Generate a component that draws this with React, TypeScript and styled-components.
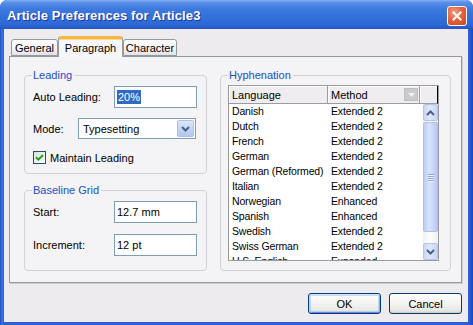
import React from 'react';
import styled, { createGlobalStyle } from 'styled-components';

const GlobalStyle = createGlobalStyle`
  html, body { margin: 0; padding: 0; width: 473px; height: 325px; overflow: hidden; background: #ffffff; }
  * { box-sizing: border-box; }
`;

const UI_FONT = `Tahoma, "Liberation Sans", Arial, sans-serif`;

const Window = styled.div`
  position: relative;
  width: 473px;
  height: 325px;
  display: flex;
  flex-direction: column;
  background: linear-gradient(90deg, #1d4fc9 0px, #3b72e0 2px, #2c5fd6 4px, #2c5fd6 calc(100% - 4px), #1a47bd 100%);
  border-radius: 7px 7px 0 0;
  overflow: hidden;
  font-family: ${UI_FONT};
  font-size: 11px;
  color: #000;
`;

const TitleBar = styled.div`
  height: 29px;
  flex: none;
  display: flex;
  align-items: center;
  justify-content: space-between;
  padding: 0 6px 0 7px;
  background: linear-gradient(#86b0f2 0%, #5a90e8 8%, #3d79de 30%, #3270da 60%, #2d68d6 85%, #2455c8 100%);
  border-radius: 7px 7px 0 0;
`;

const Title = styled.div`
  font-family: "Liberation Sans", Arial, sans-serif;
  font-weight: bold;
  font-size: 13px;
  color: #ffffff;
  text-shadow: 1px 1px 0 #1a3a9c;
  padding-top: 2px;
  letter-spacing: 0.1px;
`;

const CloseButton = styled.div`
  width: 20px;
  height: 20px;
  margin-top: 2px;
  border: 1px solid #ffffff;
  border-radius: 3px;
  background: radial-gradient(circle at 35% 30%, #f0a084 0%, #e4643c 45%, #cc4520 100%);
  display: flex;
  align-items: center;
  justify-content: center;
`;

const Client = styled.div`
  flex: 1;
  margin: 0 5px 3px 4px;
  background: #eeebee;
  display: flex;
  flex-direction: column;
  padding: 7px 6px 0 5px;
`;

const TabStrip = styled.div`
  height: 20px;
  display: flex;
  align-items: flex-end;
  padding-left: 2px;
  position: relative;
  z-index: 2;
`;

const Tab = styled.div<{ $active?: boolean; $w: number }>`
  width: ${(p) => p.$w}px;
  height: ${(p) => (p.$active ? 21 : 17)}px;
  margin-bottom: ${(p) => (p.$active ? -1 : 0)}px;
  border: 1px solid #919b9c;
  border-bottom: ${(p) => (p.$active ? 'none' : '1px solid #919b9c')};
  border-top: ${(p) => (p.$active ? '3px solid #f5b545' : '1px solid #919b9c')};
  border-radius: 3px 3px 0 0;
  background: ${(p) => (p.$active ? '#f7f6f8' : 'linear-gradient(#ffffff, #f3f2f5 60%, #e4e2e8)')};
  display: flex;
  align-items: center;
  justify-content: center;
  padding-top: ${(p) => (p.$active ? 0 : 1)}px;
  ${(p) => (p.$active ? 'box-shadow: inset 0 1px 0 #fdd889;' : '')}
`;

const Panel = styled.div`
  height: 227px;
  border: 1px solid #919b9c;
  background: #f4f3f5;
  box-shadow: 1px 1px 0 #cfccd2;
  display: flex;
  gap: 13px;
  padding: 12px 10px 0 14px;
`;

const Column = styled.div`
  display: flex;
  flex-direction: column;
  gap: 10px;
`;

const Group = styled.fieldset<{ $w: number; $h: number; $pl?: number; $pr?: number }>`
  margin: 0;
  min-width: 0;
  width: ${(p) => p.$w}px;
  height: ${(p) => p.$h}px;
  border: 1px solid #d3d0d8;
  border-radius: 4px;
  padding: 0 ${(p) => p.$pr ?? 8}px 0 ${(p) => p.$pl ?? 8}px;
`;

const Legend = styled.legend<{ $ml?: number }>`
  color: #2150c5;
  padding: 0 2px 0 1px;
  margin-left: ${(p) => p.$ml ?? -1}px;
  line-height: 13px;
  font-size: 11px;
`;

const Row = styled.div<{ $h: number; $mt: number }>`
  display: flex;
  align-items: center;
  height: ${(p) => p.$h}px;
  margin-top: ${(p) => p.$mt}px;
`;

const Label = styled.div<{ $w?: number }>`
  width: ${(p) => (p.$w ? `${p.$w}px` : 'auto')};
  flex: none;
  white-space: nowrap;
`;

const TextField = styled.div`
  width: 83px;
  height: 22px;
  border: 1px solid #7f9db9;
  background: #ffffff;
  display: flex;
  align-items: center;
  padding-left: 2px;
  white-space: nowrap;
`;

const Selected = styled.span`
  background: #316ac5;
  color: #ffffff;
  padding: 0 1px;
  line-height: 14px;
`;

const Select = styled.div`
  width: 118px;
  height: 21px;
  border: 1px solid #7f9db9;
  background: #ffffff;
  display: flex;
  align-items: stretch;
  padding: 1px;
`;

const SelectText = styled.div`
  flex: 1;
  display: flex;
  align-items: center;
  padding-left: 3px;
`;

const DropButton = styled.div`
  width: 17px;
  border: 1px solid #b0c0e0;
  border-radius: 2px;
  background: linear-gradient(#dfe7fa, #c3d3f5 55%, #b3c6f1);
  display: flex;
  align-items: center;
  justify-content: center;
`;

const CheckBox = styled.div`
  width: 13px;
  height: 13px;
  border: 1px solid #1c5180;
  background: linear-gradient(135deg, #dcdcd7, #ffffff);
  display: flex;
  align-items: center;
  justify-content: center;
  margin-right: 4px;
`;

const ListView = styled.div`
  margin-top: 3px;
  width: 211px;
  height: 176px;
  border: 1px solid #9a9aa0;
  background: #ffffff;
  display: flex;
  flex-direction: column;
  overflow: hidden;
  font-size: 10.5px;
  letter-spacing: -0.15px;
`;

const HeaderRow = styled.div`
  height: 18px;
  flex: none;
  display: flex;
`;

const HeaderCell = styled.div<{ $w: number; $dark?: boolean }>`
  width: ${(p) => p.$w}px;
  flex: none;
  height: 18px;
  background: #efedf0;
  border-right: 1px solid ${(p) => (p.$dark ? '#000000' : '#9d9ba0')};
  border-bottom: 1px solid #9d9ba0;
  box-shadow: inset 1px 1px 0 #ffffff;
  display: flex;
  align-items: center;
  padding-left: 3px;
  padding-right: 1px;
  gap: 4px;
  font-size: 11px;
  letter-spacing: 0;
`;

const HeaderText = styled.div`
  flex: 1;
`;

const SortBox = styled.div`
  width: 14px;
  height: 13px;
  background: #cbcbcf;
  border: 1px solid #bdbdc2;
  display: flex;
  align-items: center;
  justify-content: center;
`;

const ListBody = styled.div`
  flex: 1;
  display: flex;
  min-height: 0;
`;

const Rows = styled.div`
  flex: 1;
  overflow: hidden;
`;

const ListRow = styled.div`
  height: 15px;
  display: flex;
  line-height: 15px;
  white-space: nowrap;
`;

const Cell = styled.div<{ $w?: number }>`
  width: ${(p) => (p.$w ? `${p.$w}px` : 'auto')};
  flex: ${(p) => (p.$w ? 'none' : '1')};
  padding-left: 3px;
  overflow: hidden;
`;

const ScrollBar = styled.div`
  width: 15px;
  flex: none;
  display: flex;
  flex-direction: column;
  background: linear-gradient(90deg, #f3f2f0, #fdfdfb 50%, #f1f0ee);
`;

const ScrollButton = styled.div`
  height: 17px;
  flex: none;
  border: 1px solid #b4c4e6;
  border-radius: 2px;
  background: linear-gradient(90deg, #c9d7f6, #dfe7fb 45%, #c7d5f5);
  display: flex;
  align-items: center;
  justify-content: center;
`;

const Track = styled.div`
  flex: 1;
  display: flex;
  flex-direction: column;
  padding-top: 1px;
`;

const Thumb = styled.div`
  height: 110px;
  border: 1px solid #aebfe8;
  border-radius: 2px;
  background: linear-gradient(90deg, #bccdf5, #d8e2fb 40%, #c9d7f8 70%, #b7c8f2);
  display: flex;
  flex-direction: column;
  align-items: center;
  justify-content: center;
  gap: 1px;
`;

const Grip = styled.div`
  width: 6px;
  height: 1px;
  background: #8ea6d9;
  box-shadow: 0 1px 0 #eef3fe;
`;

const ButtonBar = styled.div`
  display: flex;
  justify-content: flex-end;
  gap: 8px;
  margin-top: 10px;
`;

const Button = styled.div<{ $default?: boolean }>`
  width: 73px;
  height: 21px;
  border: 1px solid #003c74;
  border-radius: 3px;
  background: linear-gradient(#ffffff, #f3f3f1 50%, #e9e8e4 85%, #d8d5ce);
  display: flex;
  align-items: center;
  justify-content: center;
  ${(p) =>
    p.$default
      ? 'box-shadow: inset 0 1px 0 #cee7ff, inset 1px 0 0 #bcd4f6, inset -1px 0 0 #89adf0, inset 0 -1px 0 #6982ee, inset 0 0 0 2px rgba(150, 185, 245, 0.5);'
      : 'box-shadow: inset 0 -1px 0 #d0ccc2;'}
`;

const Chevron = ({ up, color = '#4d6185' }: { up?: boolean; color?: string }) => (
  <svg width="9" height="6" viewBox="0 0 9 6">
    <path d={up ? 'M1 5 L4.5 1.5 L8 5' : 'M1 1 L4.5 4.5 L8 1'} stroke={color} strokeWidth="2" fill="none" />
  </svg>
);

const rows: [string, string][] = [
  ['Danish', 'Extended 2'],
  ['Dutch', 'Extended 2'],
  ['French', 'Extended 2'],
  ['German', 'Extended 2'],
  ['German (Reformed)', 'Extended 2'],
  ['Italian', 'Extended 2'],
  ['Norwegian', 'Enhanced'],
  ['Spanish', 'Enhanced'],
  ['Swedish', 'Extended 2'],
  ['Swiss German', 'Extended 2'],
  ['U.S. English', 'Expanded'],
];

export default function App() {
  return (
    <>
      <GlobalStyle />
      <Window>
        <TitleBar>
          <Title>Article Preferences for Article3</Title>
          <CloseButton>
            <svg width="10" height="10" viewBox="0 0 10 10">
              <path d="M1.5 1.5 L8.5 8.5 M8.5 1.5 L1.5 8.5" stroke="#ffffff" strokeWidth="2" strokeLinecap="square" />
            </svg>
          </CloseButton>
        </TitleBar>
        <Client>
          <TabStrip>
            <Tab $w={47}>General</Tab>
            <Tab $w={65} $active>
              Paragraph
            </Tab>
            <Tab $w={54}>Character</Tab>
          </TabStrip>
          <Panel>
            <Column>
              <Group $w={183} $h={105}>
                <Legend>Leading</Legend>
                <Row $h={22} $mt={4}>
                  <Label $w={81}>Auto Leading:</Label>
                  <TextField>
                    <Selected>20%</Selected>
                  </TextField>
                </Row>
                <Row $h={21} $mt={10}>
                  <Label $w={45}>Mode:</Label>
                  <Select>
                    <SelectText>Typesetting</SelectText>
                    <DropButton>
                      <Chevron />
                    </DropButton>
                  </Select>
                </Row>
                <Row $h={13} $mt={12}>
                  <CheckBox>
                    <svg width="9" height="9" viewBox="0 0 9 9">
                      <path d="M1 4.2 L3.4 6.6 L8 2" stroke="#21a121" strokeWidth="2" fill="none" />
                    </svg>
                  </CheckBox>
                  <Label>Maintain Leading</Label>
                </Row>
              </Group>
              <Group $w={183} $h={87}>
                <Legend>Baseline Grid</Legend>
                <Row $h={22} $mt={4}>
                  <Label $w={81}>Start:</Label>
                  <TextField>12.7 mm</TextField>
                </Row>
                <Row $h={22} $mt={11}>
                  <Label $w={81}>Increment:</Label>
                  <TextField>12 pt</TextField>
                </Row>
              </Group>
            </Column>
            <Group $w={231} $h={202} $pl={7} $pr={11}>
              <Legend $ml={0}>Hyphenation</Legend>
              <ListView>
                <HeaderRow>
                  <HeaderCell $w={99}>
                    <HeaderText>Language</HeaderText>
                  </HeaderCell>
                  <HeaderCell $w={92}>
                    <HeaderText>Method</HeaderText>
                    <SortBox>
                      <svg width="7" height="4" viewBox="0 0 7 4">
                        <path d="M0 0 L7 0 L3.5 4 Z" fill="#f2f2f4" />
                      </svg>
                    </SortBox>
                  </HeaderCell>
                  <HeaderCell $w={18} $dark />
                </HeaderRow>
                <ListBody>
                  <Rows>
                    {rows.map(([lang, method]) => (
                      <ListRow key={lang}>
                        <Cell $w={99}>{lang}</Cell>
                        <Cell>{method}</Cell>
                      </ListRow>
                    ))}
                  </Rows>
                  <ScrollBar>
                    <ScrollButton>
                      <Chevron up />
                    </ScrollButton>
                    <Track>
                      <Thumb>
                        <Grip />
                        <Grip />
                        <Grip />
                        <Grip />
                      </Thumb>
                    </Track>
                    <ScrollButton>
                      <Chevron />
                    </ScrollButton>
                  </ScrollBar>
                </ListBody>
              </ListView>
            </Group>
          </Panel>
          <ButtonBar>
            <Button $default>OK</Button>
            <Button>Cancel</Button>
          </ButtonBar>
        </Client>
      </Window>
    </>
  );
}
